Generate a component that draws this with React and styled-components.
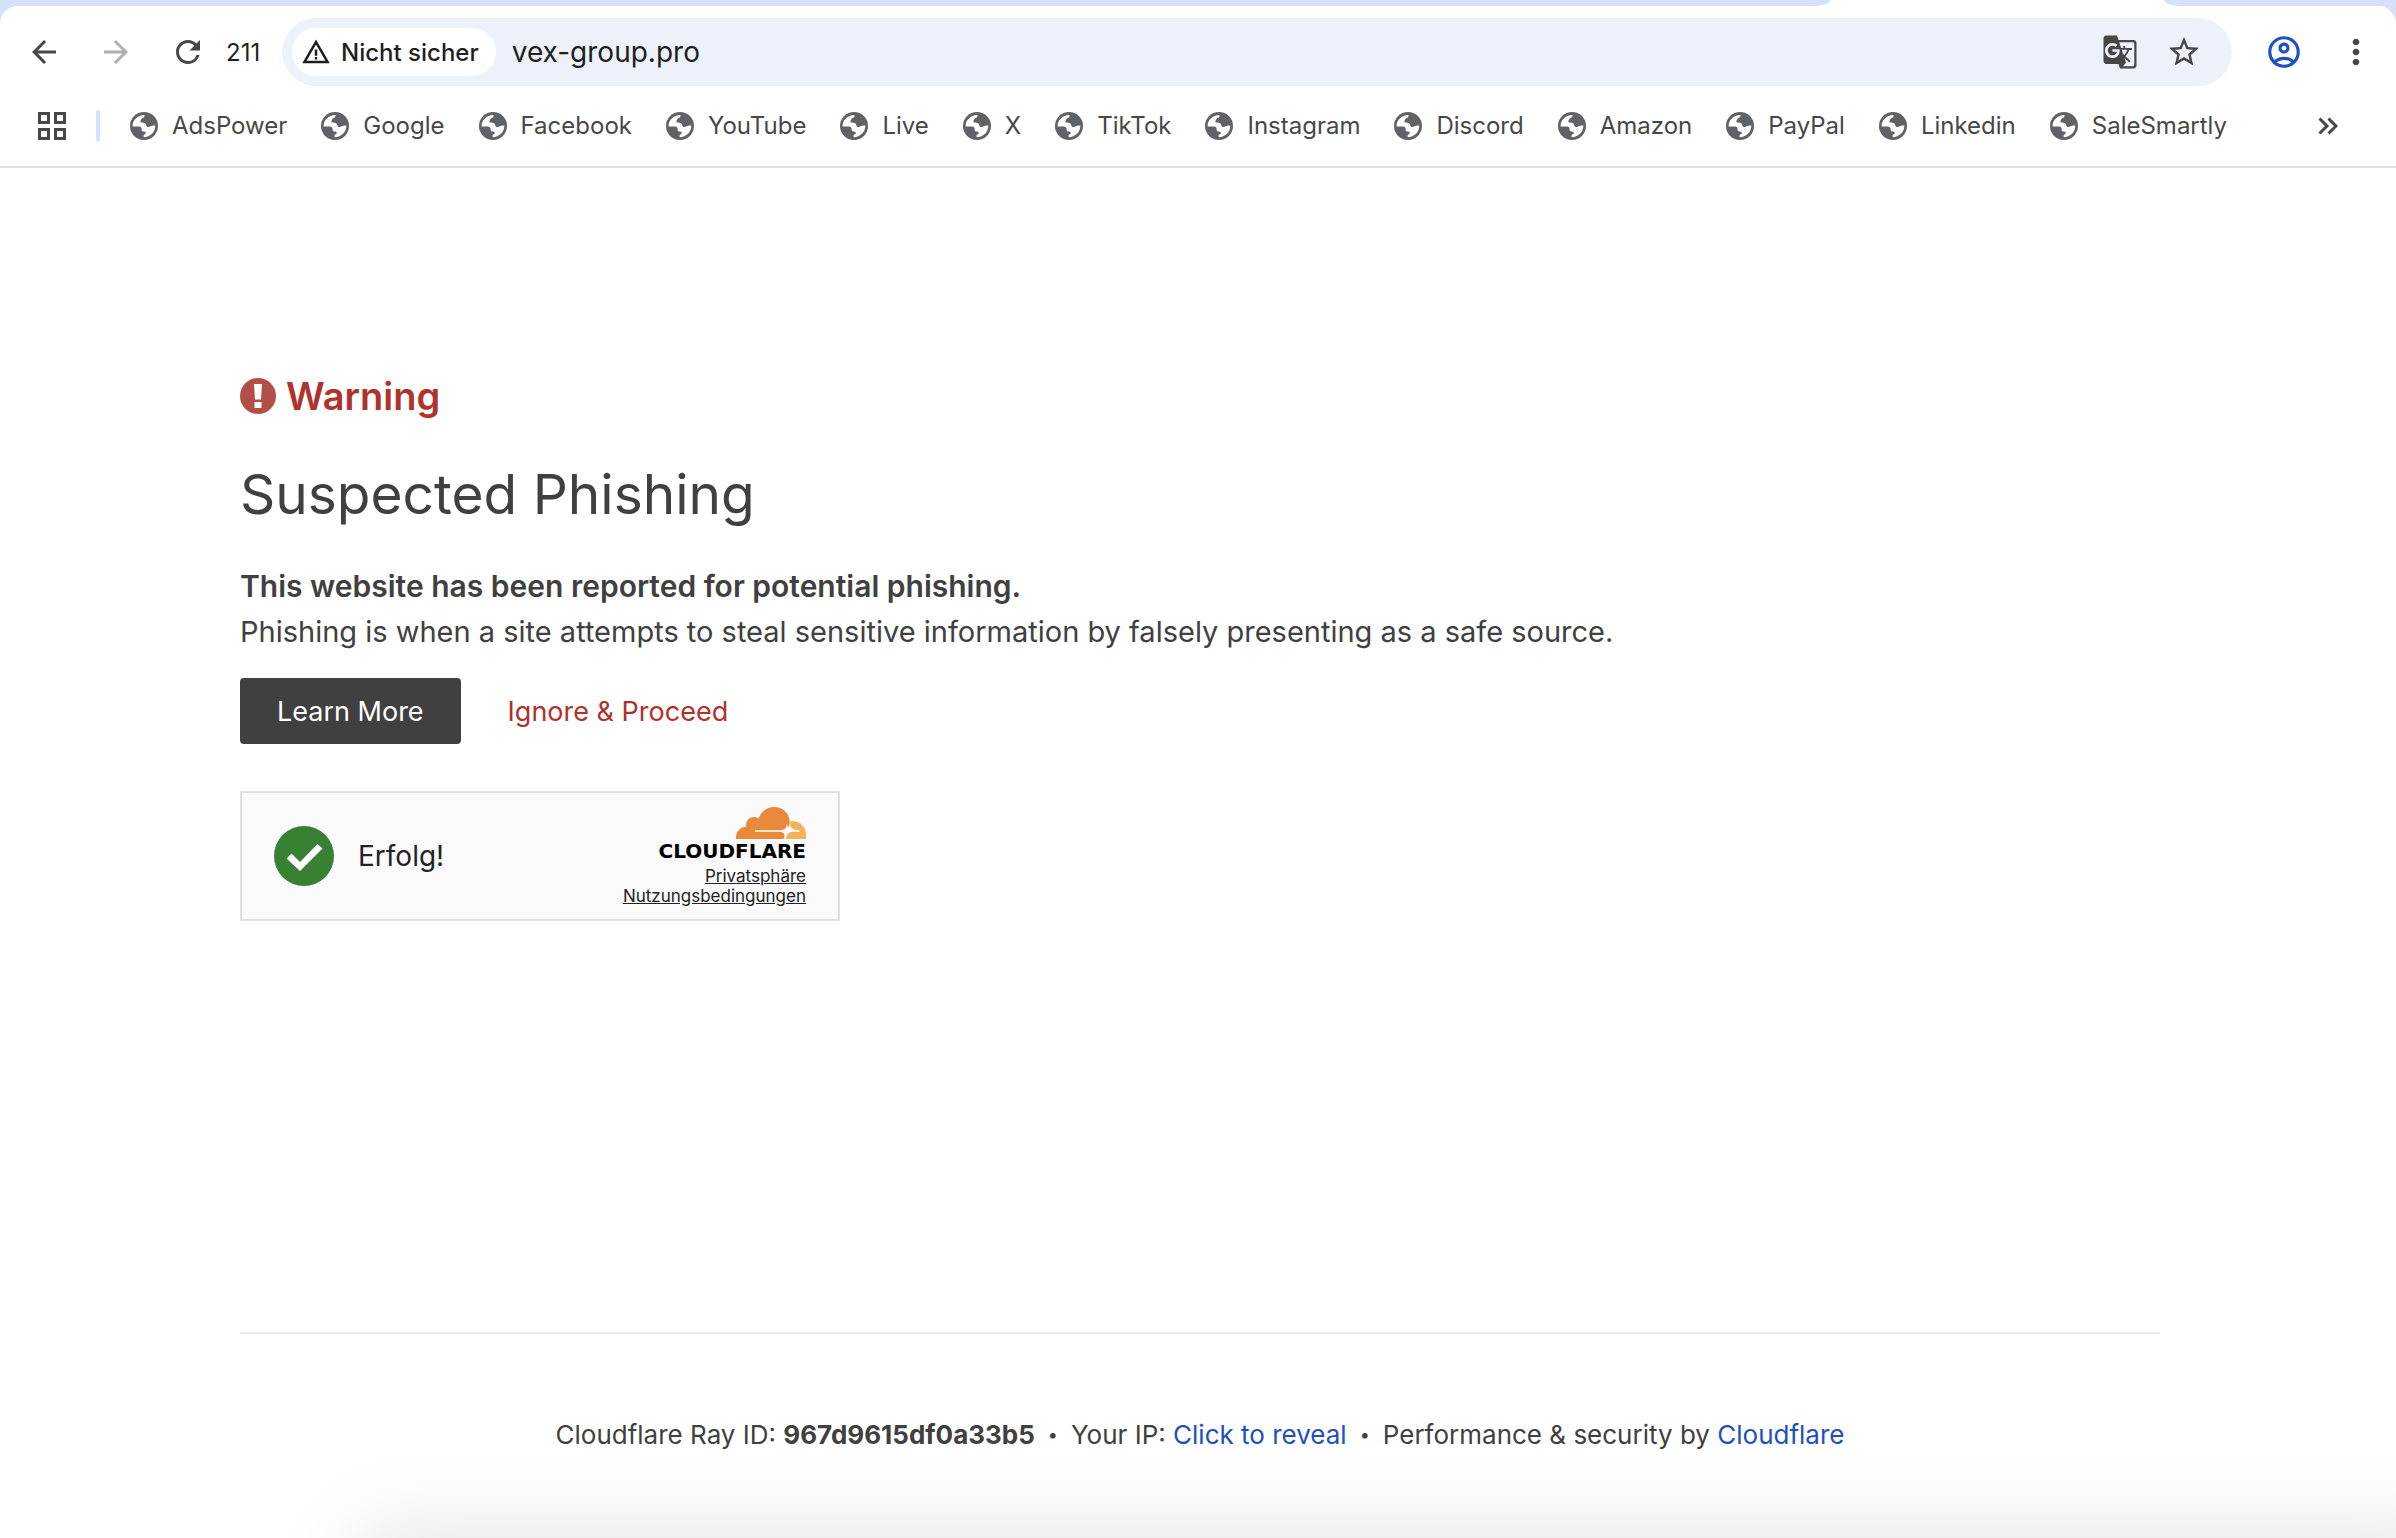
import React, { useState } from 'react';
import styled, { createGlobalStyle } from 'styled-components';
import {
  MdArrowBack,
  MdArrowForward,
  MdRefresh,
  MdWarningAmber,
  MdGTranslate,
  MdStarBorder,
  MdOutlineAccountCircle,
  MdMoreVert,
} from 'react-icons/md';

const bookmarks = [
  'AdsPower',
  'Google',
  'Facebook',
  'YouTube',
  'Live',
  'X',
  'TikTok',
  'Instagram',
  'Discord',
  'Amazon',
  'PayPal',
  'Linkedin',
  'SaleSmartly',
];

function GlobeIcon() {
  return (
    <svg width="28" height="28" viewBox="0 0 28 28" aria-hidden="true">
      <circle cx="14" cy="14" r="14" fill="#5f6368" />
      <path
        d="M2.6 14.6C2.4 8 7.6 3 14.4 2.9c.5 1.7-.5 2.7-2 3.2-1 .4-.8 1.4-1.6 2.2-.6.6-.4 1.500-.2 2.300 2.600 0 5.400.2 5.800 2.900.3 2 2.400 1.600 3.600.9 1.700-1 3.500-1 5.300-.9.3 6.300-5 11.500-11.700 11.800v-2.500c1.300-.4 2.300-1 2.200-2.100-.1-1.200-1.500-1.200-2.900-1.300-1.200-.1-1.300-1.100-1.300-2.300 0-1.400-1-2.500-2.600-2.500z"
        fill="#fff"
      />
    </svg>
  );
}

function AppsIcon() {
  return (
    <svg width="28" height="28" viewBox="0 0 28 28" fill="none" stroke="#474747" strokeWidth="3" aria-hidden="true">
      <rect x="1.5" y="1.5" width="9" height="9" />
      <rect x="17.5" y="1.5" width="9" height="9" />
      <rect x="1.5" y="17.5" width="9" height="9" />
      <rect x="17.5" y="17.5" width="9" height="9" />
    </svg>
  );
}

function MoreBookmarksIcon() {
  return (
    <svg width="20" height="18" viewBox="0 0 20 18" fill="none" stroke="#474747" strokeWidth="3" aria-hidden="true">
      <path d="M1.500 1.500 9 9l-7.500 7.500M10.500 1.500 18 9l-7.500 7.500" />
    </svg>
  );
}

function AlertIcon() {
  return (
    <svg width="36" height="36" viewBox="0 0 36 36" aria-hidden="true">
      <circle cx="18" cy="18" r="18" fill="#b34f46" />
      <path d="M14 6h8l-1 15.500h-6zM14.500 24h7v6h-7z" fill="#fff" />
    </svg>
  );
}

function SuccessIcon() {
  return (
    <svg width="60" height="60" viewBox="0 0 60 60" aria-hidden="true">
      <circle cx="30" cy="30" r="30" fill="#388032" />
      <path d="M12.500 32.500 17.500 27.500 26 36 43.500 18 48.500 22.500 26 45z" fill="#fff" />
    </svg>
  );
}

function CloudIcon() {
  return (
    <svg width="70" height="32" viewBox="0 0 70 32" aria-hidden="true">
      <path
        d="M0 32C-.5 25 4 20 10.200 19.800 9.500 14 13 10 18 10c1.800 0 3.400.6 4.600 1.600C25 4.500 31 0 38 0c8.500 0 15 6 15.600 13.600C54 18 52 21.500 48.500 22.600L45 23H19.500c-.8 0-.8 2 0 2H45c3.500.8 4.500 3.500 2.500 7z"
        fill="#e8893c"
      />
      <path
        d="M55 14c8.500-.5 15 5.500 15 13.500V32H49.500c.5-4 2.500-6.500 5.500-7.200h8c1 0 1-1.600 0-1.600l-5-.7c-3.500-1.500-5-4.500-3-8.500z"
        fill="#f3b35a"
      />
      <path d="M19 23h27v2H19z" fill="#fbe5cf" />
      <path d="M51 17c.6 4.500 2 6.200 6 7-4 .8-5.800 2.500-7.500 7-.3-4-1.500-6-5-7 4-.8 5.500-2.500 6.500-7z" fill="#fff" />
    </svg>
  );
}

export default function App() {
  const [url, setUrl] = useState('vex-group.pro');

  return (
    <Page>
      <GlobalStyle />
      <Browser>
        <TabStrip>
          <InactiveTabs />
          <TabStripEnd />
        </TabStrip>
        <Toolbar>
          <NavButtons>
            <IconButton type="button" aria-label="Back"><MdArrowBack size={36} /></IconButton>
            <IconButton type="button" aria-label="Forward" disabled><MdArrowForward size={36} /></IconButton>
            <IconButton type="button" aria-label="Reload"><MdRefresh size={36} /></IconButton>
          </NavButtons>
          <ProfileNumber>211</ProfileNumber>
          <Omnibox>
            <SecurityChip type="button">
              <MdWarningAmber size={30} />
              Nicht sicher
            </SecurityChip>
            <UrlInput aria-label="Address" value={url} onChange={(e) => setUrl(e.target.value)} />
            <OmniboxActions>
              <IconButton type="button" aria-label="Translate"><MdGTranslate size={36} /></IconButton>
              <IconButton type="button" aria-label="Bookmark"><MdStarBorder size={36} /></IconButton>
            </OmniboxActions>
          </Omnibox>
          <ToolbarEnd>
            <IconButton type="button" aria-label="Profile" $color="#1f51c4"><MdOutlineAccountCircle size={38} /></IconButton>
            <IconButton type="button" aria-label="Menu"><MdMoreVert size={40} /></IconButton>
          </ToolbarEnd>
        </Toolbar>
        <BookmarkBar>
          <IconButton type="button" aria-label="Apps"><AppsIcon /></IconButton>
          <Separator />
          <BookmarkList>
            {bookmarks.map((name) => (
              <Bookmark key={name} href="#">
                <GlobeIcon />
                {name}
              </Bookmark>
            ))}
          </BookmarkList>
          <IconButton type="button" aria-label="More bookmarks"><MoreBookmarksIcon /></IconButton>
        </BookmarkBar>
      </Browser>

      <Main>
        <Warning>
          <AlertIcon />
          Warning
        </Warning>
        <Title>Suspected Phishing</Title>
        <Lead>This website has been reported for potential phishing.</Lead>
        <Text>
          Phishing is when a site attempts to steal sensitive information by falsely presenting as a safe source.
        </Text>
        <Actions>
          <LearnMore href="#">Learn More</LearnMore>
          <Proceed type="button">Ignore &amp; Proceed</Proceed>
        </Actions>
        <Turnstile>
          <Status>
            <SuccessIcon />
            Erfolg!
          </Status>
          <Branding>
            <CloudIcon />
            <Wordmark>CLOUDFLARE</Wordmark>
            <SmallLink href="#">Privatsphäre</SmallLink>
            <SmallLink href="#">Nutzungsbedingungen</SmallLink>
          </Branding>
        </Turnstile>
        <Footer>
          <span>Cloudflare Ray ID: <strong>967d9615df0a33b5</strong></span>
          <Dot>•</Dot>
          <span>Your IP: <RevealButton type="button">Click to reveal</RevealButton></span>
          <Dot>•</Dot>
          <span>Performance &amp; security by <FooterLink href="#">Cloudflare</FooterLink></span>
        </Footer>
      </Main>
      <BottomShadow />
    </Page>
  );
}

const GlobalStyle = createGlobalStyle`
  * {
    box-sizing: border-box;
  }
  body {
    margin: 0;
    background: #fff;
    color: #404040;
    font-family: Inter, "Liberation Sans", sans-serif;
  }
  button,
  input {
    font-family: inherit;
  }
  svg {
    display: block;
    flex-shrink: 0;
  }
`;

const Page = styled.div`
  min-height: 100vh;
  overflow: hidden;
`;

const Browser = styled.header`
  background: #d5e1fb;
  border-bottom: 2px solid #e0e0e0;
`;

const TabStrip = styled.div`
  display: flex;
  justify-content: space-between;
  gap: 334px;
  height: 6px;
  background: #fff;
`;

const InactiveTabs = styled.div`
  flex: 1;
  background: #d5e1fb;
  border-bottom-right-radius: 16px 6px;
`;

const TabStripEnd = styled.div`
  width: 232px;
  background: #d5e1fb;
  border-bottom-left-radius: 16px 6px;
`;

const Toolbar = styled.div`
  display: flex;
  align-items: center;
  padding: 12px 20px 0 26px;
  background: #fff;
  border-radius: 18px 18px 0 0;
`;

const IconButton = styled.button`
  display: flex;
  align-items: center;
  justify-content: center;
  padding: 0;
  border: 0;
  background: transparent;
  color: ${({ $color }) => $color || '#474747'};
  cursor: pointer;
  &:disabled {
    color: #b0b0b0;
    cursor: default;
  }
`;

const NavButtons = styled.div`
  display: flex;
  gap: 36px;
`;

const ProfileNumber = styled.span`
  width: 76px;
  padding-left: 20px;
  font-size: 24px;
  color: #1f1f1f;
`;

const Omnibox = styled.div`
  flex: 1;
  display: flex;
  align-items: center;
  height: 68px;
  padding: 0 30px 0 10px;
  border-radius: 34px;
  background: #edf1fa;
`;

const SecurityChip = styled.button`
  display: flex;
  align-items: center;
  gap: 10px;
  height: 48px;
  padding: 0 17px 0 9px;
  border: 0;
  border-radius: 24px;
  background: #fff;
  color: #1f1f1f;
  font-size: 24px;
  font-weight: 500;
  white-space: nowrap;
`;

const UrlInput = styled.input`
  flex: 1;
  min-width: 0;
  padding: 0 16px;
  border: 0;
  outline: 0;
  background: transparent;
  color: #1f1f1f;
  font-size: 28px;
`;

const OmniboxActions = styled.div`
  display: flex;
  gap: 28px;
`;

const ToolbarEnd = styled.div`
  display: flex;
  align-items: center;
  gap: 33px;
  padding-left: 33px;
`;

const BookmarkBar = styled.nav`
  display: flex;
  align-items: center;
  height: 80px;
  padding: 0 58px 0 38px;
  background: #fff;
`;

const Separator = styled.div`
  width: 4px;
  height: 32px;
  margin: 0 30px;
  border-radius: 2px;
  background: #d3e3fd;
`;

const BookmarkList = styled.div`
  flex: 1;
  display: flex;
  gap: 34px;
`;

const Bookmark = styled.a`
  display: flex;
  align-items: center;
  gap: 14px;
  color: #474747;
  font-size: 24px;
  line-height: 28px;
  text-decoration: none;
`;

const Main = styled.main`
  padding: 200px 236px 0 240px;
`;

const Warning = styled.h2`
  display: flex;
  align-items: center;
  gap: 10px;
  margin: 0;
  color: #af322c;
  font-size: 38px;
  font-weight: 600;
  line-height: 56px;
`;

const Title = styled.h1`
  margin: 30px 0 0;
  font-size: 55px;
  font-weight: 400;
  line-height: 80px;
`;

const Lead = styled.p`
  margin: 30px 0 0;
  font-size: 30px;
  font-weight: 600;
  line-height: 45px;
`;

const Text = styled.p`
  margin: 0;
  font-size: 29px;
  line-height: 45px;
`;

const Actions = styled.div`
  display: flex;
  align-items: center;
  gap: 47px;
  margin-top: 24px;
`;

const LearnMore = styled.a`
  padding: 2px 37px 0;
  border-radius: 4px;
  background: #404040;
  color: #fff;
  font-size: 27px;
  line-height: 64px;
  text-decoration: none;
`;

const Proceed = styled.button`
  padding: 0;
  border: 0;
  background: transparent;
  color: #af322c;
  font-size: 27px;
`;

const Turnstile = styled.section`
  display: flex;
  align-items: center;
  justify-content: space-between;
  width: 600px;
  height: 130px;
  margin-top: 47px;
  padding: 0 32px;
  border: 2px solid #e0e0e0;
  background: #fafafa;
`;

const Status = styled.div`
  display: flex;
  align-items: center;
  gap: 24px;
  color: #232323;
  font-size: 28px;
`;

const Branding = styled.div`
  display: flex;
  flex-direction: column;
  align-items: flex-end;
`;

const Wordmark = styled.span`
  margin-bottom: 2px;
  color: #000;
  font-family: "DejaVu Sans", sans-serif;
  font-size: 20px;
  font-weight: 700;
  line-height: 25px;
`;

const SmallLink = styled.a`
  color: #232323;
  font-size: 17px;
  line-height: 20px;
`;

const Footer = styled.footer`
  display: flex;
  justify-content: center;
  margin-top: 411px;
  padding: 80px 0;
  border-top: 2px solid #ebebeb;
  font-size: 26px;
  line-height: 42px;
  white-space: nowrap;
  strong {
    font-weight: 700;
  }
`;

const Dot = styled.span`
  margin: 0 13px;
  font-size: 18px;
`;

const RevealButton = styled.button`
  padding: 0;
  border: 0;
  background: transparent;
  color: #1d4fc0;
  font-size: inherit;
  line-height: inherit;
`;

const FooterLink = styled.a`
  color: #1d4fc0;
  text-decoration: none;
`;

/* soft shade rising from below the window's lower edge */
const BottomShadow = styled.div`
  position: fixed;
  top: 100%;
  left: 360px;
  right: -60px;
  height: 200px;
  box-shadow: 0 0 90px rgba(0, 0, 0, 0.13);
  pointer-events: none;
`;
